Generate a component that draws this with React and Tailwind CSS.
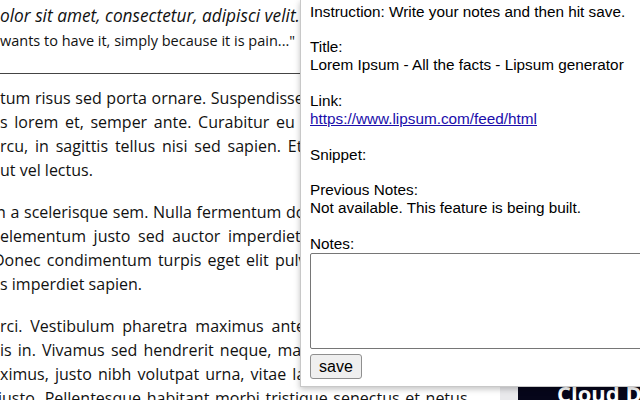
export default function App() {
  return (
    <div className="relative w-[640px] h-[400px] overflow-hidden bg-white">
      {/* page behind the popup */}
      <div className="font-['Open_Sans',sans-serif] text-[#111]">
        <div className="pt-[4px] text-[17.3px] leading-[24px] italic whitespace-nowrap">
          olor sit amet, consectetur, adipisci velit..."
        </div>
        <div className="mt-[4px] text-[14.5px] leading-[18px] whitespace-nowrap">
          wants to have it, simply because it is pain..."
        </div>
        <hr className="mt-[23px] w-[320px] border-t border-[#444]" />
        <div className="mt-[12px] text-[16px] leading-[24px] whitespace-nowrap">
          <p className="mb-[18px]">
            <span className="block [word-spacing:0.5px]">tum risus sed porta ornare. Suspendisse potenti</span>
            <span className="block [word-spacing:2.5px]">s lorem et, semper ante. Curabitur eu nisl</span>
            <span className="block [word-spacing:2.7px]">rcu, in sagittis tellus nisi sed sapien. Etiam</span>
            <span className="block">ut vel lectus.</span>
          </p>
          <p className="mb-[18px]">
            <span className="block ml-[-4px] [word-spacing:0.5px]">n a scelerisque sem. Nulla fermentum dolor</span>
            <span className="block [word-spacing:3.5px]">elementum justo sed auctor imperdiet, nunc</span>
            <span className="block ml-[-7px] [word-spacing:2px]">Donec condimentum turpis eget elit pulvinar</span>
            <span className="block">s imperdiet sapien.</span>
          </p>
          <p>
            <span className="block [word-spacing:3.7px]">rci. Vestibulum pharetra maximus ante sed</span>
            <span className="block [word-spacing:2px]">is in. Vivamus sed hendrerit neque, maximus</span>
            <span className="block [word-spacing:2px]">ximus, justo nibh volutpat urna, vitae lacinia</span>
            <span className="block ml-[-2px] [word-spacing:1.5px]">justo. Pellentesque habitant morbi tristique senectus et netus</span>
          </p>
        </div>
      </div>

      {/* ad banner peeking out at the bottom */}
      <div className="absolute left-[500px] top-[384px] w-[18px] h-[20px] bg-[#e9e9ec]" />
      <div className="absolute left-[518px] top-[379px] w-[140px] h-[30px] bg-[#06061a] pl-[39px] font-['Open_Sans',sans-serif] text-[22px] font-bold leading-[28px] text-white whitespace-nowrap">
        Cloud Data
      </div>

      {/* extension popup */}
      <div className="absolute left-[300px] top-0 w-[360px] h-[387px] bg-white border-l border-b border-[#c8c8c8] shadow-[0_2px_6px_rgba(0,0,0,0.25)] pl-[9px] pt-[3px] font-['Liberation_Sans',Arial,sans-serif] text-[15.3px] leading-[18px] text-black">
        <div>Instruction: Write your notes and then hit save.</div>
        <div className="mt-[17px]">Title:</div>
        <div>Lorem Ipsum - All the facts - Lipsum generator</div>
        <div className="mt-[18px]">Link:</div>
        <a href="#" className="block w-fit text-[#1a0dab] underline">https://www.lipsum.com/feed/html</a>
        <div className="mt-[18px]">Snippet:</div>
        <div className="mt-[17px]">Previous Notes:</div>
        <div>Not available. This feature is being built.</div>
        <div className="mt-[18px]">Notes:</div>
        <textarea className="block w-[345px] h-[96px] border border-[#767676] rounded-[2px] resize-none" />
        <button className="mt-[5px] h-[25px] px-[8px] text-[16px] leading-[20px] bg-[#efefef] border border-[#8f8f8f] rounded-[3px]">
          save
        </button>
      </div>
    </div>
  );
}
